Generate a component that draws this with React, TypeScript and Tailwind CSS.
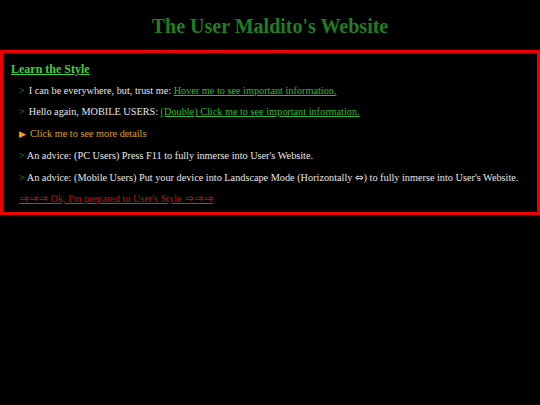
import React from "react";

function Arrow() {
  return <span className="text-[#2e9a2e]">&gt;</span>;
}

export default function App() {
  return (
    <div className="min-h-[405px] w-[540px] bg-black font-['Liberation_Serif','Times_New_Roman',serif] text-[#e6e6e6]">
      <h1 className="pt-[14px] pb-[12px] text-center text-[20px] font-bold leading-[24px] text-[#1f7f1f]">
        The User Maldito's Website
      </h1>

      <div className="border-[3px] border-[#ee0000] px-[8px] pt-[8px] pb-[6px]">
        <h2 className="text-[12px] font-bold leading-[16px] text-[#3bd43b] underline">
          Learn the Style
        </h2>

        <div className="mt-[6px] flex flex-col gap-[6px] pl-[8px] text-[10.25px] leading-[15.4px]">
          <p>
            <Arrow />
            <span className="ml-[4px]">I can be everywhere, but, trust me: </span>
            <a className="text-[#33b833] underline">Hover me to see important information.</a>
          </p>
          <p>
            <Arrow />
            <span className="ml-[4px]">Hello again, MOBILE USERS: </span>
            <a className="text-[#33b833] underline">(Double) Click me to see important information.</a>
          </p>
          <p className="text-[#d8a028]">
            <span className="text-[8.5px] text-[#f0a020]">&#9654;</span>
            <span className="ml-[4px]">Click me to see more details</span>
          </p>
          <p>
            <Arrow /> An advice: (PC Users) Press F11 to fully inmerse into User's Website.
          </p>
          <p>
            <Arrow /> An advice: (Mobile Users) Put your device into Landscape Mode (Horizontally{" "}
            <span className="font-['DejaVu_Sans',sans-serif]">&#8660;</span>) to fully inmerse into User's Website.
          </p>
          <p>
            <a className="text-[#c80f0f] underline decoration-[#2d6a8a]">
              <span className="font-['DejaVu_Sans',sans-serif] text-[11.5px]">&#8658;&#8658;&#8658;</span> Ok, I'm
              prepared to User's Style{" "}
              <span className="font-['DejaVu_Sans',sans-serif] text-[11.5px]">&#8658;&#8658;&#8658;</span>
            </a>
          </p>
        </div>
      </div>
    </div>
  );
}
